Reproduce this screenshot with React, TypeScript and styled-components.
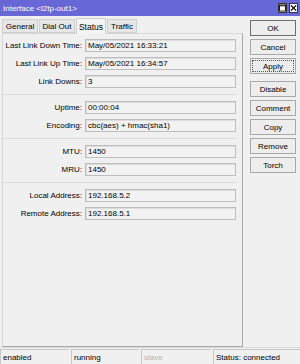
import styled, { createGlobalStyle } from 'styled-components';

const GlobalStyle = createGlobalStyle`
  html, body {
    margin: 0;
    padding: 0;
    background: #f0f0f0;
  }
  body {
    font-family: 'Liberation Sans', Arial, sans-serif;
    font-size: 8px;
    color: #000;
  }
`;

type Field = { label: string; value: string };

const groups: Field[][] = [
  [
    { label: 'Last Link Down Time:', value: 'May/05/2021 16:33:21' },
    { label: 'Last Link Up Time:', value: 'May/05/2021 16:34:57' },
    { label: 'Link Downs:', value: '3' },
  ],
  [
    { label: 'Uptime:', value: '00:00:04' },
    { label: 'Encoding:', value: 'cbc(aes) + hmac(sha1)' },
  ],
  [
    { label: 'MTU:', value: '1450' },
    { label: 'MRU:', value: '1450' },
  ],
  [
    { label: 'Local Address:', value: '192.168.5.2' },
    { label: 'Remote Address:', value: '192.168.5.1' },
  ],
];

const tabs = [
  { name: 'General', width: 36 },
  { name: 'Dial Out', width: 36 },
  { name: 'Status', width: 30 },
  { name: 'Traffic', width: 30 },
];

const App = () => {
  return (
    <Window>
      <GlobalStyle />
      <TitleBar>
        <TitleText>Interface &lt;l2tp-out1&gt;</TitleText>
        <TitleButtons>
          <WinButton>
            <svg width="8" height="8" viewBox="0 0 8 8">
              <rect x="0.5" y="0.5" width="7" height="7" fill="none" stroke="#000" />
              <line x1="0" y1="1.5" x2="8" y2="1.5" stroke="#000" />
            </svg>
          </WinButton>
          <WinButton>
            <svg width="8" height="8" viewBox="0 0 8 8">
              <path d="M1 1 L7 7 M7 1 L1 7" stroke="#000" strokeWidth="1.6" />
            </svg>
          </WinButton>
        </TitleButtons>
      </TitleBar>

      <Body>
        <LeftColumn>
          <TabStrip>
            {tabs.map((t) => (
              <Tab key={t.name} width={t.width} active={t.name === 'Status'}>
                {t.name}
              </Tab>
            ))}
          </TabStrip>
          <Panel>
            {groups.map((group, gi) => (
              <Group key={gi} first={gi === 0}>
                {group.map((f) => (
                  <Row key={f.label}>
                    <Label>{f.label}</Label>
                    <Value>{f.value}</Value>
                  </Row>
                ))}
              </Group>
            ))}
          </Panel>
        </LeftColumn>

        <ButtonColumn>
          <ButtonGroup>
            <Button isDefault>OK</Button>
            <Button>Cancel</Button>
            <Button focused>Apply</Button>
          </ButtonGroup>
          <ButtonGroup>
            <Button>Disable</Button>
            <Button>Comment</Button>
            <Button>Copy</Button>
            <Button>Remove</Button>
            <Button>Torch</Button>
          </ButtonGroup>
        </ButtonColumn>
      </Body>

      <StatusBar>
        <StatusCell width={69}>enabled</StatusCell>
        <StatusCell width={68}>running</StatusCell>
        <StatusCell width={70} dim>
          slave
        </StatusCell>
        <StatusCell width={87}>Status: connected</StatusCell>
      </StatusBar>
    </Window>
  );
};

export default App;

const Window = styled.div`
  width: 300px;
  height: 364px;
  display: flex;
  flex-direction: column;
  background: #f0f0f0;
  overflow: hidden;
`;

const TitleBar = styled.div`
  height: 16px;
  background: #6767d6;
  display: flex;
  align-items: center;
  justify-content: space-between;
  padding: 0 2px 0 3px;
`;

const TitleText = styled.div`
  color: #fff;
  font-size: 8px;
`;

const TitleButtons = styled.div`
  display: flex;
  gap: 2px;
`;

const WinButton = styled.div`
  width: 9px;
  height: 10px;
  background: #fff;
  border: 1px solid #333;
  box-sizing: border-box;
  display: flex;
  align-items: center;
  justify-content: center;
`;

const Body = styled.div`
  flex: 1;
  display: flex;
  min-height: 0;
`;

const LeftColumn = styled.div`
  width: 243px;
  padding-left: 2px;
  box-sizing: border-box;
  display: flex;
  flex-direction: column;
`;

const TabStrip = styled.div`
  height: 17px;
  display: flex;
  align-items: flex-end;
`;

const Tab = styled.div<{ width: number; active?: boolean }>`
  width: ${(p) => p.width}px;
  height: ${(p) => (p.active ? 16 : 14)}px;
  box-sizing: border-box;
  display: flex;
  align-items: center;
  justify-content: center;
  white-space: nowrap;
  background: ${(p) => (p.active ? '#f4f4f4' : '#e6e6e6')};
  border: 1px solid #cfcfcf;
  border-bottom: ${(p) => (p.active ? 'none' : '1px solid #cfcfcf')};
  margin-right: 1px;
  position: relative;
  top: ${(p) => (p.active ? 1 : 0)}px;
  font-size: ${(p) => (p.active ? 8.5 : 8)}px;
`;

const Panel = styled.div`
  flex: 1;
  border: 1px solid #a9a9a9;
  border-left-color: #d6d6d6;
  border-top-color: #d6d6d6;
  padding: 5px 5px 0 0;
  display: flex;
  flex-direction: column;
`;

const Group = styled.div<{ first?: boolean }>`
  display: flex;
  flex-direction: column;
  gap: 5px;
  padding: ${(p) => (p.first ? '0 0 6px' : '6px 0')};
  border-top: ${(p) => (p.first ? 'none' : '1px solid #dcdcdc')};
  margin-left: -2px;
  padding-left: 2px;
  &:not(:last-child) {
    padding-bottom: 6px;
  }
`;

const Row = styled.div`
  display: grid;
  grid-template-columns: 82px 151px;
  align-items: center;
  height: 13px;
`;

const Label = styled.div`
  text-align: right;
  padding-right: 3px;
  white-space: nowrap;
`;

const Value = styled.div`
  height: 13px;
  box-sizing: border-box;
  border: 1px solid #bdbdbd;
  box-shadow: inset 1px 1px 0 #dcdcdc;
  background: #f2f2f2;
  padding-left: 2px;
  display: flex;
  align-items: center;
  white-space: nowrap;
`;

const ButtonColumn = styled.div`
  width: 57px;
  padding: 4px 4px 0 7px;
  box-sizing: border-box;
  display: flex;
  flex-direction: column;
  gap: 7px;
`;

const ButtonGroup = styled.div`
  display: flex;
  flex-direction: column;
  gap: 3px;
`;

const Button = styled.div<{ isDefault?: boolean; focused?: boolean }>`
  height: 16px;
  box-sizing: border-box;
  border: 1px solid ${(p) => (p.isDefault ? '#6e6e6e' : '#a8a8a8')};
  background: #ededed;
  display: flex;
  align-items: center;
  justify-content: center;
  position: relative;
  &::after {
    content: '';
    display: ${(p) => (p.focused ? 'block' : 'none')};
    position: absolute;
    inset: 1px;
    border: 1px dotted #555;
  }
`;

const StatusBar = styled.div`
  height: 17px;
  display: flex;
  gap: 2px;
  border-top: 1px solid #dadada;
  box-sizing: border-box;
  padding-top: 1px;
`;

const StatusCell = styled.div<{ width: number; dim?: boolean }>`
  width: ${(p) => p.width}px;
  box-sizing: border-box;
  border-left: 1px solid #c8c8c8;
  border-top: 1px solid #c8c8c8;
  padding-left: 2px;
  display: flex;
  align-items: center;
  color: ${(p) => (p.dim ? '#b4b4b4' : '#000')};
  white-space: nowrap;
  &:last-child {
    flex: 1;
  }
`;
